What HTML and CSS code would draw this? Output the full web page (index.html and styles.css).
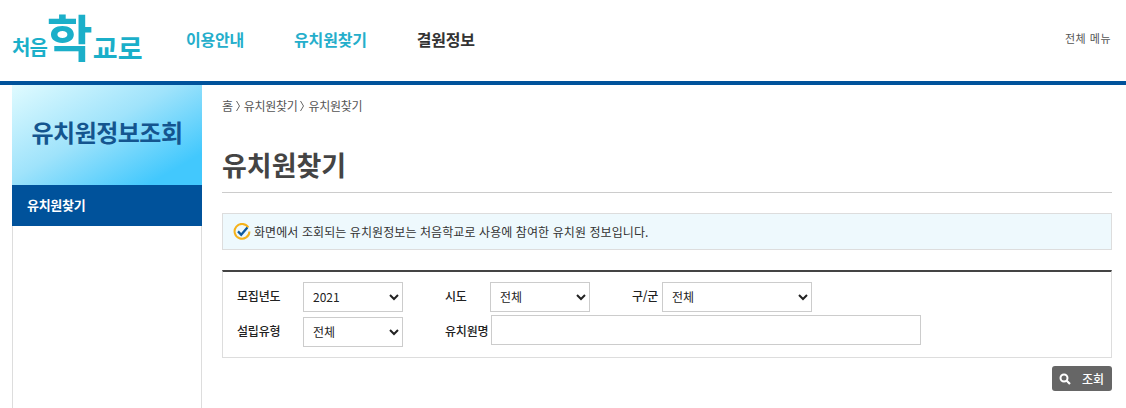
FILE: index.html
```html
<!DOCTYPE html>
<html lang="ko">
<head>
<meta charset="utf-8">
<title>유치원찾기</title>
<link rel="stylesheet" href="styles.css">
</head>
<body>
<header class="header">
  <a class="logo"><span class="logo-s">처음</span><span class="logo-l">학</span><span class="logo-m">교로</span></a>
  <nav class="gnb">
    <a class="gnb-item">이용안내</a>
    <a class="gnb-item">유치원찾기</a>
    <a class="gnb-item gnb-dark">결원정보</a>
  </nav>
  <a class="all-menu">전체 메뉴</a>
</header>
<div class="wrap">
  <aside class="side">
    <h2 class="side-title">유치원정보조회</h2>
    <a class="side-link">유치원찾기</a>
  </aside>
  <main class="main">
    <div class="crumb">
      <span>홈</span>
      <svg class="sep" width="11" height="12" viewBox="0 0 11 12"><path d="M3.5 1l3 5-3 5" fill="none" stroke="#666" stroke-width="1"/></svg>
      <span>유치원찾기</span>
      <svg class="sep" width="11" height="12" viewBox="0 0 11 12"><path d="M3.5 1l3 5-3 5" fill="none" stroke="#666" stroke-width="1"/></svg>
      <span>유치원찾기</span>
    </div>
    <h1 class="title">유치원찾기</h1>
    <div class="notice">
      <svg class="notice-icon" width="18" height="18" viewBox="0 0 18 18"><path d="M15.4 4.6A7.4 7.4 0 1 0 16.4 8.4" fill="none" stroke="#f5b21b" stroke-width="2"/><path d="M5 8.4l3.2 3.4 6.2-7.4" fill="none" stroke="#0f5a9e" stroke-width="2.3"/></svg>
      <span>화면에서 조회되는 유치원정보는 처음학교로 사용에 참여한 유치원 정보입니다.</span>
    </div>
    <form class="search">
      <div class="row">
        <label class="lbl lbl-a">모집년도</label>
        <select class="sel sel-a"><option>2021</option></select>
        <label class="lbl lbl-b">시도</label>
        <select class="sel sel-a"><option>전체</option></select>
        <label class="lbl lbl-c">구/군</label>
        <select class="sel sel-c"><option>전체</option></select>
      </div>
      <div class="row row-2">
        <label class="lbl lbl-a">설립유형</label>
        <select class="sel sel-a"><option>전체</option></select>
        <label class="lbl lbl-d">유치원명</label>
        <input class="inp" type="text">
      </div>
    </form>
    <div class="actions">
      <button class="btn" type="button">
        <svg width="12" height="12" viewBox="0 0 12 12"><circle cx="5" cy="5" r="3.5" fill="none" stroke="#fff" stroke-width="2"/><path d="M7.5 7.5L11 11" stroke="#fff" stroke-width="2.2"/></svg>
        <span>조회</span>
      </button>
    </div>
  </main>
</div>
</body>
</html>
```
FILE: styles.css
```css
* { box-sizing: border-box; }
html, body { margin: 0; height: 408px; overflow: hidden; background: #fff; }
body { font-family: "Noto Sans CJK KR", "Noto Sans", sans-serif; color: #333; }
.header { height: 85px; border-bottom: 4px solid #00529b; display: flex; align-items: center; padding: 0 12px; }
.logo { width: 174px; color: #1bafc9; font-weight: 700; display: flex; align-items: center; height: 81px; white-space: nowrap; line-height: 1; }
.logo-s { font-size: 20px; letter-spacing: -1px; margin-top: 12px; }
.logo-l { font-size: 50px; margin-top: -12px; }
.logo-m { font-size: 27px; margin-top: 14px; }
.gnb { display: flex; gap: 50px; font-size: 16px; font-weight: 700; margin-top: -4px; }
.gnb-item { color: #25aecb; letter-spacing: -0.2px; }
.gnb-dark { color: #333; }
.all-menu { margin-left: auto; margin-right: 3px; margin-top: -6px; font-size: 11px; color: #555; letter-spacing: 0.5px; }
.wrap { display: flex; padding-left: 12px; height: 323px; }
.side { width: 190px; border-left: 1px solid #ddd; border-right: 1px solid #ddd; flex: none; }
.side-title { margin: 0 -1px; height: 100px; padding-bottom: 8px; display: flex; align-items: center; justify-content: center; font-size: 24px; font-weight: 700; color: #14558f; letter-spacing: -0.5px; background: linear-gradient(150deg, #e0fbff 0%, #9fe3fb 45%, #42c8fd 85%); }
.side-link { display: flex; align-items: center; margin: 0 -1px; height: 41px; padding: 0 0 2px 15px; background: #00529b; color: #fff; font-size: 13px; font-weight: 700; letter-spacing: -0.3px; }
.main { flex: none; width: 890px; margin-left: 20px; }
.crumb { display: flex; align-items: center; height: 43px; padding-bottom: 2px; font-size: 12px; line-height: 16px; color: #555; white-space: nowrap; letter-spacing: -0.3px; }
.sep { flex: none; }
.title { margin: 0; height: 65px; padding-top: 18px; font-size: 27px; line-height: 38px; font-weight: 700; color: #444; border-bottom: 1px solid #ccc; }
.notice { margin-top: 20px; height: 37px; display: flex; align-items: center; gap: 3px; padding-left: 10px; background: #eef9fd; border: 1px solid #ddd; font-size: 12px; color: #333; letter-spacing: 0.08px; }
.notice-icon { flex: none; }
.search { margin-top: 20px; height: 88px; border: 1px solid #ddd; border-top: 2px solid #444; padding: 10px 0 0 14px; }
.row { display: flex; align-items: center; height: 30px; }
.row-2 { margin-top: 5px; }
.lbl { font-size: 12px; font-weight: 500; color: #222; margin-top: -4px; white-space: nowrap; letter-spacing: -0.2px; }
.lbl-a { width: 66px; }
.lbl-b { width: 45px; margin-left: 42px; }
.lbl-c { width: 30px; margin-left: 42px; }
.lbl-d { width: 46px; margin-left: 42px; }
.sel { height: 30px; border: 1px solid #ccc; background: #fff; padding: 0 5px 2px; font: 12px "Noto Sans CJK KR", sans-serif; color: #222; }
.sel-a { width: 100px; }
.sel-c { width: 150px; }
.inp { width: 430px; height: 30px; border: 1px solid #ccc; margin-top: -4px; background: #fff; }
.actions { display: flex; justify-content: flex-end; margin-top: 8px; }
.btn { width: 60px; height: 25px; padding: 0 8px 0 7px; border: 0; border-radius: 3px; background: #666; color: #fff; display: flex; align-items: center; justify-content: space-between; font: 500 12px "Noto Sans CJK KR", sans-serif; }
```
